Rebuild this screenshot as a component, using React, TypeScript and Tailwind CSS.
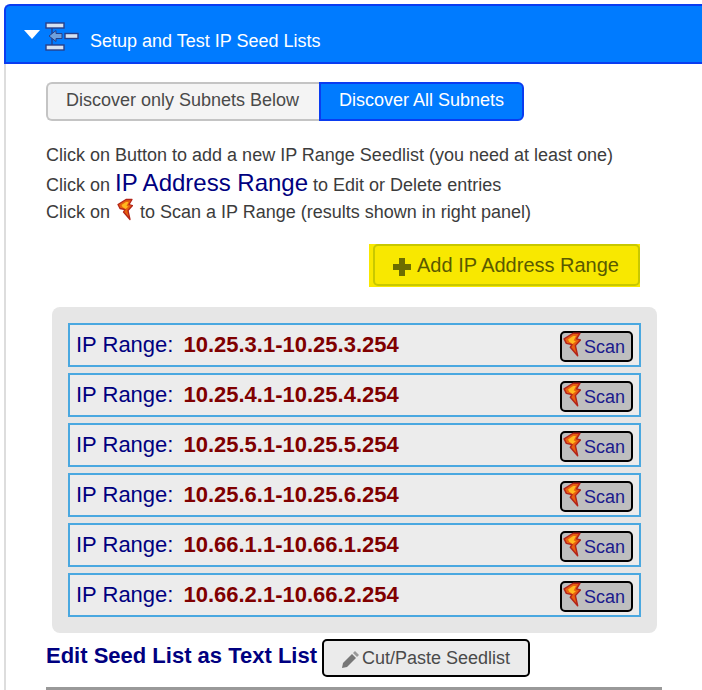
const ranges = [
  '10.25.3.1-10.25.3.254',
  '10.25.4.1-10.25.4.254',
  '10.25.5.1-10.25.5.254',
  '10.25.6.1-10.25.6.254',
  '10.66.1.1-10.66.1.254',
  '10.66.2.1-10.66.2.254',
];

// Small flame/bolt icon used on scan rows
function Bolt({ className }: { className: string }) {
  return (
    <svg viewBox="0 0 16 22" className={className}>
      <path
        d="M1 6 L9 1 L15 1 L12 6 L15.5 7 L11 12 L13 21 L6.5 13.5 L8 11 L3 10 Z"
        fill="#e8600f"
        stroke="#b3241a"
        strokeWidth="1.3"
        strokeLinejoin="round"
      />
      <path d="M4.5 6.5 L9 3.5 L11.5 3.5 L9.5 7.5 L11.5 8 L8.5 10.5 L5.5 8.5 Z" fill="#ffb81f" />
    </svg>
  );
}

function TreeIcon() {
  return (
    <svg viewBox="0 0 34 29" className="w-[34px] h-[29px]">
      <path d="M7 6 V23" stroke="#27408b" strokeWidth="1.4" />
      <rect x="1" y="1" width="18" height="5" fill="#d5e2f2" stroke="#27408b" strokeWidth="1.4" />
      <rect x="1" y="23" width="18" height="5" fill="#d5e2f2" stroke="#27408b" strokeWidth="1.4" />
      <rect x="20" y="11.5" width="13" height="5" fill="#d5e2f2" stroke="#27408b" strokeWidth="1.4" />
      <path d="M4 14 L11 8.5 V11.5 H17 V16.5 H11 V19.5 Z" fill="#6fa0dc" stroke="#27408b" strokeWidth="1" />
    </svg>
  );
}

function ScanRow({ range }: { range: string }) {
  return (
    <div className="h-11 bg-[#ececec] border-2 border-[#4aa8e0] flex items-center justify-between pl-1.5 pr-1.5">
      <div className="flex items-center -mt-[2px] text-[22px] text-[#000080]">
        <span>IP Range:</span>
        <span className="ml-[10px] font-bold text-[#800000]">{range}</span>
      </div>
      <button className="w-[73px] h-[31px] mt-[3px] bg-[#bfbfbf] border-2 border-black rounded-[5px] flex items-center pl-[1px] text-[18px] text-[#1a1a8c]">
        <Bolt className="w-[18px] h-[25px] -mt-[5px] shrink-0" />
        <span className="ml-[3px] mt-[2px]">Scan</span>
      </button>
    </div>
  );
}

export default function App() {
  return (
    <div className="w-[702px] h-[690px] overflow-hidden bg-white pt-1 pl-1 font-['Liberation_Sans',Arial,sans-serif]">
      {/* header */}
      <div className="h-[60px] bg-[#007bff] border-2 border-[#0a3cf0] border-r-0 rounded-tl-[6px] flex items-center text-white">
        <svg viewBox="0 0 16 9" className="w-4 h-[9px] ml-[18px] shrink-0">
          <path d="M0 0 H16 L8 9 Z" fill="#ffffff" />
        </svg>
        <div className="ml-[5px] mt-1"><TreeIcon /></div>
        <span className="ml-[11px] mt-[14px] text-[18px]">Setup and Test IP Seed Lists</span>
      </div>

      <div className="border-l-2 border-[#dddddd] h-[626px] pl-10">
        {/* toggle */}
        <div className="flex pt-[18px] text-[18px]">
          <div className="w-[273px] h-[39px] pr-0.5 pb-0.5 flex items-center justify-center bg-[#f4f4f4] border-2 border-[#c4c4c4] border-r-0 rounded-l-[6px] text-[#4a4a4a]">
            Discover only Subnets Below
          </div>
          <div className="w-[205px] h-[39px] pb-0.5 flex items-center justify-center bg-[#007bff] border-2 border-[#0a3cf0] rounded-r-[6px] text-white">
            Discover All Subnets
          </div>
        </div>

        {/* help text */}
        <div className="mt-[23px] text-[18px] text-[#3c3c3c]">
          <div className="h-[23px] leading-[23px]">Click on Button to add a new IP Range Seedlist (you need at least one)</div>
          <div className="h-[32px] leading-[32px]">
            Click on <span className="text-[24px] text-[#000080]">IP Address Range</span> to Edit or Delete entries
          </div>
          <div className="h-[26px] leading-[26px] flex items-center">
            Click on
            <Bolt className="w-[16px] h-[23px] ml-[7px] mr-[7px] -mt-[6px]" />
            to Scan a IP Range (results shown in right panel)
          </div>
        </div>

        {/* add button */}
        <div className="mt-[19px] h-[43px] ml-[323px] w-[271px] bg-[#f8e800]">
          <button className="ml-1 w-[267px] h-[42px] bg-[#f8e800] border-2 border-[#c8c800] rounded-[5px] flex items-center text-[20px] text-[#5a5a00]">
            <svg viewBox="0 0 18 18" className="w-[18px] h-[18px] ml-[18px] mt-[3px]">
              <path d="M6 0 H12 V6 H18 V12 H12 V18 H6 V12 H0 V6 H6 Z" fill="#6d6d00" />
            </svg>
            <span className="ml-[6px]">Add IP Address Range</span>
          </button>
        </div>

        {/* seed list */}
        <div className="mt-5 ml-1.5 w-[605px] h-[326px] bg-[#e6e6e6] rounded-[8px] p-4 flex flex-col gap-1.5">
          {ranges.map((r) => (
            <ScanRow key={r} range={r} />
          ))}
        </div>

        {/* edit as text */}
        <div className="flex items-center h-[38px] mt-1.5">
          <span className="text-[22px] font-bold text-[#000080] -mt-[6px]">Edit Seed List as Text List</span>
          <button className="ml-[5px] w-[208px] h-[38px] bg-[#ebebeb] border-2 border-black rounded-[5px] flex items-center text-[18px] text-[#4a4a4a]">
            <svg viewBox="0 0 20 20" className="w-[20px] h-[20px] ml-[16px] mr-[2px] mt-[3px] shrink-0">
              <path d="M2 18 L3 13 L12 4 L16 8 L7 17 Z" fill="#777777" />
              <path d="M13 3 L15 1 L19 5 L17 7 Z" fill="#999999" />
            </svg>
            <span>Cut/Paste Seedlist</span>
          </button>
        </div>

        <div className="mt-[10px] w-[616px] h-[3px] bg-[#999999]" />
      </div>
    </div>
  );
}
